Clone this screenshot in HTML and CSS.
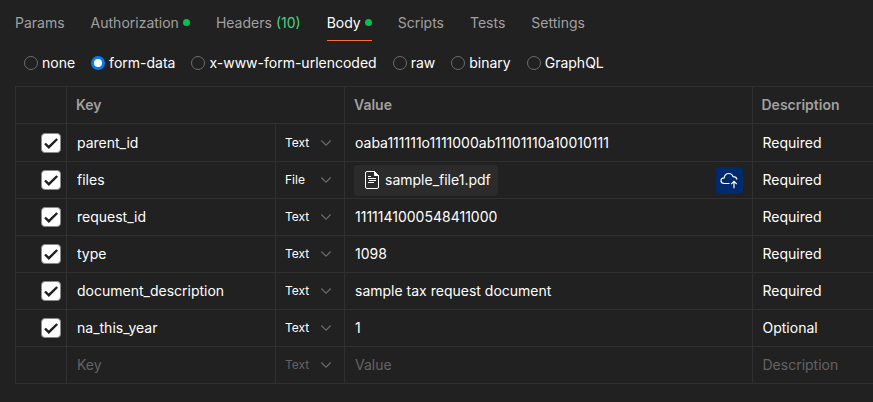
FILE: index.html
```
<!DOCTYPE html>
<html lang="en">
<head>
  <meta charset="UTF-8">
  <meta name="viewport" content="width=device-width, initial-scale=1.0">
  <title>Request body</title>
  <link rel="stylesheet" href="styles.css">
</head>
<body>
  <div class="request">
    <nav class="tabs">
      <a class="tab" href="#params">Params</a>
      <a class="tab" href="#authorization">Authorization<span class="dot"></span></a>
      <a class="tab" href="#headers">Headers <span class="count">(10)</span></a>
      <a class="tab active" href="#body">Body<span class="dot"></span></a>
      <a class="tab" href="#scripts">Scripts</a>
      <a class="tab" href="#tests">Tests</a>
      <a class="tab" href="#settings">Settings</a>
    </nav>

    <form class="body-editor">
      <div class="modes">
        <label class="mode"><input type="radio" name="mode">none</label>
        <label class="mode"><input type="radio" name="mode" checked>form-data</label>
        <label class="mode"><input type="radio" name="mode">x-www-form-urlencoded</label>
        <label class="mode"><input type="radio" name="mode">raw</label>
        <label class="mode"><input type="radio" name="mode">binary</label>
        <label class="mode"><input type="radio" name="mode">GraphQL</label>
      </div>

      <table class="params">
        <colgroup>
          <col class="col-check">
          <col class="col-key">
          <col class="col-type">
          <col class="col-value">
          <col class="col-description">
        </colgroup>
        <thead>
          <tr>
            <th></th>
            <th colspan="2">Key</th>
            <th>Value</th>
            <th>Description</th>
          </tr>
        </thead>
        <tbody>
          <tr>
            <td class="check"><input type="checkbox" aria-label="Include parent_id" checked></td>
            <td><input class="field" type="text" aria-label="Key" value="parent_id"></td>
            <td><select class="type" aria-label="Type"><option>Text</option><option>File</option></select></td>
            <td><input class="field" type="text" aria-label="Value" value="oaba111111o1111000ab11101110a10010111"></td>
            <td><input class="field" type="text" aria-label="Description" value="Required"></td>
          </tr>
          <tr>
            <td class="check"><input type="checkbox" aria-label="Include files" checked></td>
            <td><input class="field" type="text" aria-label="Key" value="files"></td>
            <td><select class="type" aria-label="Type"><option>Text</option><option selected>File</option></select></td>
            <td>
              <div class="file-cell">
                <button class="file" type="button">
                  <svg width="14" height="18" viewBox="0 0 14 18" fill="none" stroke="#fff">
                    <path d="M2 .5h7.5l4 4V16a1.5 1.5 0 0 1-1.5 1.5H2A1.5 1.5 0 0 1 .5 16V2A1.5 1.5 0 0 1 2 .5z"/>
                    <path d="M9.5.5v4h4z" fill="#fff"/>
                    <path d="M3 5.5h3M3 7.5h8M4 9.5h7M3 11.5h6"/>
                  </svg>
                  sample_file1.pdf
                </button>
                <button class="upload" type="button" aria-label="Upload file">
                  <svg width="18" height="18" viewBox="0 0 18 18" fill="none" stroke="#fff" stroke-width="1.2">
                    <path d="M9.5 12.5H4.2C2.3 12.5 1 11.4 1 9.8 1 8.2 2.3 6.9 4.2 6.9 4.5 4.3 6.4 2.5 8.8 2.5c2.200 0 3.700 1.300 4.300 3.200 2 0 3.400 1 3.900 2.800"/>
                    <path d="M14 17.200v-6.700M11.200 13.100 14 10.300l2.800 2.800"/>
                  </svg>
                </button>
              </div>
            </td>
            <td><input class="field" type="text" aria-label="Description" value="Required"></td>
          </tr>
          <tr>
            <td class="check"><input type="checkbox" aria-label="Include request_id" checked></td>
            <td><input class="field" type="text" aria-label="Key" value="request_id"></td>
            <td><select class="type" aria-label="Type"><option>Text</option><option>File</option></select></td>
            <td><input class="field" type="text" aria-label="Value" value="1111141000548411000"></td>
            <td><input class="field" type="text" aria-label="Description" value="Required"></td>
          </tr>
          <tr>
            <td class="check"><input type="checkbox" aria-label="Include type" checked></td>
            <td><input class="field" type="text" aria-label="Key" value="type"></td>
            <td><select class="type" aria-label="Type"><option>Text</option><option>File</option></select></td>
            <td><input class="field" type="text" aria-label="Value" value="1098"></td>
            <td><input class="field" type="text" aria-label="Description" value="Required"></td>
          </tr>
          <tr>
            <td class="check"><input type="checkbox" aria-label="Include document_description" checked></td>
            <td><input class="field" type="text" aria-label="Key" value="document_description"></td>
            <td><select class="type" aria-label="Type"><option>Text</option><option>File</option></select></td>
            <td><input class="field" type="text" aria-label="Value" value="sample tax request document"></td>
            <td><input class="field" type="text" aria-label="Description" value="Required"></td>
          </tr>
          <tr>
            <td class="check"><input type="checkbox" aria-label="Include na_this_year" checked></td>
            <td><input class="field" type="text" aria-label="Key" value="na_this_year"></td>
            <td><select class="type" aria-label="Type"><option>Text</option><option>File</option></select></td>
            <td><input class="field" type="text" aria-label="Value" value="1"></td>
            <td><input class="field" type="text" aria-label="Description" value="Optional"></td>
          </tr>
          <tr class="new-row">
            <td></td>
            <td><input class="field" type="text" aria-label="Key" placeholder="Key"></td>
            <td><select class="type" aria-label="Type"><option>Text</option><option>File</option></select></td>
            <td><input class="field" type="text" aria-label="Value" placeholder="Value"></td>
            <td><input class="field" type="text" aria-label="Description" placeholder="Description"></td>
          </tr>
        </tbody>
      </table>
    </form>
  </div>
</body>
</html>
```
FILE: styles.css
```
:root {
  --background: #212121;
  --line: #303030;
  --text: #ffffff;
  --muted: #a0a0a0;
  --faint: #636363;
}

* {
  margin: 0;
  padding: 0;
  box-sizing: border-box;
}

body {
  background: var(--background);
  color: var(--text);
  font-family: Inter, "Liberation Sans", sans-serif;
  font-size: 14px;
  line-height: 20px;
}

input, select, button {
  font: inherit;
  color: inherit;
  border: none;
  background: transparent;
  outline: none;
}

.request {
  padding: 5px 0 18px 15px;
}

/* tabs */
.tabs {
  display: flex;
  gap: 26px;
}

.tab {
  display: flex;
  align-items: center;
  gap: 4px;
  height: 36px;
  border-bottom: 1px solid transparent;
  color: var(--muted);
  text-decoration: none;
  white-space: nowrap;
}

.tab.active {
  color: var(--text);
  border-color: #ff6c37;
}

.dot {
  width: 7px;
  height: 7px;
  border-radius: 50%;
  background: #0cbb52;
}

.count {
  color: #47d582;
}

/* body modes */
.modes {
  display: flex;
  gap: 16px;
  padding: 12px 0 13px 9px;
}

.mode {
  display: flex;
  align-items: center;
  gap: 4px;
  white-space: nowrap;
}

.mode input {
  appearance: none;
  width: 14px;
  height: 14px;
  border: 1px solid #6b6b6b;
  border-radius: 50%;
}

.mode input:checked {
  border: 3px solid #097bed;
  background: #fff;
}

/* form-data table */
.params {
  width: 100%;
  table-layout: fixed;
  border-collapse: collapse;
}

.col-check {
  width: 51px;
}

.col-key {
  width: 209px;
}

.col-type {
  width: 69px;
}

.col-description {
  width: 121px;
}

.params tr {
  height: 37px;
}

.params tbody tr:first-child {
  height: 38px;
}

.params th, .params td {
  border: 1px solid var(--line);
  vertical-align: middle;
}

.params th:last-child, .params td:last-child {
  border-right: none;
}

.params th {
  padding-left: 9px;
  color: var(--muted);
  font-weight: 600;
  text-align: left;
}

.params .check {
  padding-right: 5px;
  text-align: right;
}

.check input {
  appearance: none;
  display: block;
  width: 20px;
  height: 20px;
  margin-left: auto;
  border: 1px solid #8a8a8a;
  border-radius: 4px;
}

.check input:checked {
  background: #fff url("data:image/svg+xml,%3Csvg xmlns='http://www.w3.org/2000/svg' viewBox='0 0 18 18'%3E%3Cpath d='M3 9.500l3.800 3.700L15.200 5' fill='none' stroke='%23212121' stroke-width='2.400'/%3E%3C/svg%3E") center / 18px 18px no-repeat;
}

.field {
  display: block;
  width: 100%;
  height: 20px;
  padding: 0 10px;
}

.field::placeholder {
  color: var(--faint);
}

.type {
  appearance: none;
  display: block;
  width: 100%;
  height: 20px;
  padding-left: 9px;
  font-size: 12px;
  background: url("data:image/svg+xml,%3Csvg xmlns='http://www.w3.org/2000/svg' viewBox='0 0 12 8'%3E%3Cpath d='M1.300 1.500L6 6.200l4.700-4.700' fill='none' stroke='%236b6b6b' stroke-width='1.200'/%3E%3C/svg%3E") right 12px center / 12px 8px no-repeat;
}

.new-row .type {
  color: var(--faint);
}

.file-cell {
  display: flex;
  align-items: center;
  justify-content: space-between;
  padding: 0 9px;
}

.file {
  display: flex;
  align-items: center;
  gap: 6px;
  height: 31px;
  padding: 0 7px 0 11px;
  border-radius: 4px;
  background: #2b2b2b;
}

.upload {
  display: flex;
  align-items: center;
  justify-content: center;
  width: 27px;
  height: 27px;
  border-radius: 4px;
  background: #002a6e;
}
```
